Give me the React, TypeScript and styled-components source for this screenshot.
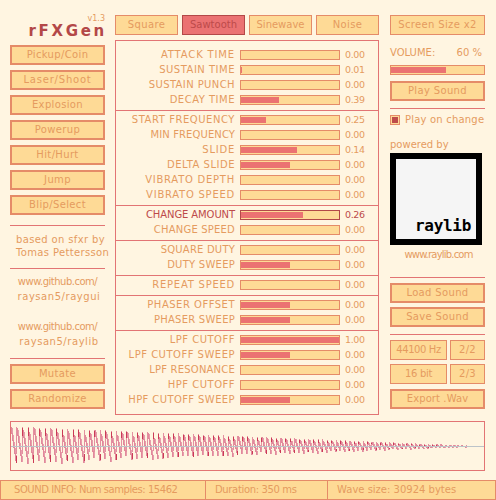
import React from 'react';
import styled, { createGlobalStyle } from 'styled-components';

const GlobalStyle = createGlobalStyle`
  html, body {
    margin: 0;
    padding: 0;
    background-color: #fff5e1;
  }
  * {
    box-sizing: border-box;
  }
`;

const Page = styled.div`
  width: 496px;
  height: 500px;
  overflow: hidden;
  display: flex;
  flex-direction: column;
  background-color: #fff5e1;
  color: #e59b5f;
  font-family: 'DejaVu Sans', sans-serif;
  font-size: 10px;
  line-height: 10px;
  letter-spacing: 0.35px;
`;

const Main = styled.div`
  display: flex;
  height: 415px;
  padding: 15px 11px 0 10px;
`;

const LeftColumn = styled.div`
  width: 95px;
  margin-right: 10px;
  display: flex;
  flex-direction: column;
`;

const MiddleColumn = styled.div`
  width: 264px;
  margin-right: 11px;
  display: flex;
  flex-direction: column;
`;

const RightColumn = styled.div`
  width: 95px;
  display: flex;
  flex-direction: column;
`;

const TitleBlock = styled.div`
  height: 30px;
  display: flex;
  flex-direction: column;
  align-items: flex-end;
`;

const Version = styled.div`
  height: 8px;
  line-height: 8px;
  font-size: 8px;
  letter-spacing: 0;
`;

const Title = styled.div`
  height: 12px;
  margin-top: 2px;
  margin-right: -2px;
  line-height: 12px;
  font-weight: bold;
  font-size: 15px;
  letter-spacing: 2.7px;
  color: #b34848;
`;

const Button = styled.div<{ $thin?: boolean; $pressed?: boolean; $mt?: number; $ls?: number }>`
  height: 20px;
  flex: none;
  margin-top: ${(p) => p.$mt ?? 0}px;
  display: flex;
  align-items: center;
  justify-content: center;
  white-space: nowrap;
  letter-spacing: ${(p) => p.$ls ?? 0.35}px;
  border: ${(p) => (p.$thin || p.$pressed ? 1 : 2)}px solid ${(p) => (p.$pressed ? '#b34848' : '#e58b68')};
  background-color: ${(p) => (p.$pressed ? '#eb7272' : '#feda96')};
  color: ${(p) => (p.$pressed ? '#bd4a4a' : '#e59b5f')};
`;

const Rule = styled.div<{ $mt: number }>`
  height: 1px;
  flex: none;
  margin-top: ${(p) => p.$mt}px;
  background-color: #e27474;
`;

const Note = styled.div<{ $mt: number; $ls?: number; $shift?: number }>`
  height: 10px;
  flex: none;
  margin-top: ${(p) => p.$mt}px;
  padding-left: ${(p) => p.$shift ?? 0}px;
  text-align: center;
  white-space: nowrap;
  letter-spacing: ${(p) => p.$ls ?? 0.35}px;
`;

const Tabs = styled.div`
  display: flex;
  gap: 4px;
  height: 20px;
  flex: none;
  & > * {
    width: 63px;
  }
`;

const Panel = styled.div`
  margin-top: 5px;
  height: 375px;
  border: 1px solid #e27474;
  display: flex;
  flex-direction: column;
`;

const Section = styled.div<{ $first?: boolean; $last?: boolean }>`
  display: flex;
  flex-direction: column;
  gap: 5px;
  padding-top: ${(p) => (p.$first ? 9 : 4)}px;
  padding-bottom: ${(p) => (p.$last ? 9 : 5)}px;
  border-top: ${(p) => (p.$first ? 'none' : '1px solid #e27474')};
`;

const Row = styled.div<{ $active?: boolean }>`
  display: grid;
  grid-template-columns: 119px 100px 33px;
  column-gap: 5px;
  height: 10px;
  color: ${(p) => (p.$active ? '#bd4a4a' : '#e59b5f')};
`;

const Label = styled.div<{ $ls?: number }>`
  text-align: right;
  white-space: nowrap;
  letter-spacing: ${(p) => p.$ls ?? 0.5}px;
`;

const Track = styled.div<{ $active?: boolean }>`
  height: 10px;
  padding: 1px 0;
  border: 1px solid ${(p) => (p.$active ? '#b34848' : '#e58b68')};
  background-color: #feda96;
`;

const Fill = styled.div`
  height: 100%;
  background-color: #eb7272;
`;

const Value = styled.div`
  font-size: 9.5px;
  letter-spacing: -0.4px;
`;

const VolumeRow = styled.div`
  margin-top: 13px;
  height: 10px;
  padding-right: 3px;
  display: flex;
  justify-content: space-between;
  white-space: nowrap;
  letter-spacing: 0;
`;

const VolumeTrack = styled(Track)`
  margin-top: 7px;
  flex: none;
`;

const CheckRow = styled.div`
  margin-top: 6px;
  height: 10px;
  display: flex;
  gap: 5px;
  white-space: nowrap;
  letter-spacing: 0.2px;
`;

const CheckBox = styled.div`
  width: 10px;
  height: 10px;
  padding: 1px;
  border: 1px solid #e58b68;
  background-color: #feda96;
  &::after {
    content: '';
    display: block;
    width: 100%;
    height: 100%;
    background-color: #bd4a4a;
  }
`;

const Powered = styled.div`
  margin-top: 15px;
  height: 10px;
  white-space: nowrap;
  letter-spacing: 0;
`;

const Logo = styled.div`
  margin-top: 3px;
  width: 92px;
  height: 92px;
  flex: none;
  display: flex;
  align-items: flex-end;
  justify-content: flex-end;
  padding: 0 5px 5px 0;
  border: 6px solid #000;
  background-color: #f5f5f5;
  color: #000;
  font-family: 'DejaVu Sans Mono', monospace;
  font-weight: bold;
  font-size: 16px;
  line-height: 16px;
  letter-spacing: -0.3px;
`;

const OptionRow = styled.div<{ $mt: number }>`
  display: grid;
  grid-template-columns: 57px 35px;
  column-gap: 3px;
  margin-top: ${(p) => p.$mt}px;
  flex: none;
`;

const WavePanel = styled.div`
  margin: 6px 11px 0 10px;
  height: 50px;
  flex: none;
  border: 1px solid #e27474;
`;

const WaveSvg = styled.svg`
  display: block;
`;

const StatusBar = styled.div`
  margin-top: 9px;
  height: 20px;
  flex: none;
  display: grid;
  grid-template-columns: 206px 122px 168px;
`;

const StatusCell = styled.div<{ $first?: boolean; $ls: number }>`
  display: flex;
  align-items: center;
  padding-left: ${(p) => (p.$first ? 13 : 9)}px;
  white-space: nowrap;
  letter-spacing: ${(p) => p.$ls}px;
  border: 1px solid #e58b68;
  border-left-width: ${(p) => (p.$first ? 1 : 0)}px;
  background-color: #feda96;
`;

type Param = { name: string; value: number; bipolar?: boolean; active?: boolean; ls?: number };

const groups: Param[][] = [
  [
    { name: 'ATTACK TIME', value: 0, ls: 0.85 },
    { name: 'SUSTAIN TIME', value: 0.01 },
    { name: 'SUSTAIN PUNCH', value: 0, ls: 0.4 },
    { name: 'DECAY TIME', value: 0.39 },
  ],
  [
    { name: 'START FREQUENCY', value: 0.25, ls: 0.55 },
    { name: 'MIN FREQUENCY', value: 0, ls: 0.1 },
    { name: 'SLIDE', value: 0.14, bipolar: true, ls: 0.75 },
    { name: 'DELTA SLIDE', value: 0, bipolar: true },
    { name: 'VIBRATO DEPTH', value: 0, ls: 0.75 },
    { name: 'VIBRATO SPEED', value: 0, ls: 0.75 },
  ],
  [
    { name: 'CHANGE AMOUNT', value: 0.26, bipolar: true, active: true, ls: -0.1 },
    { name: 'CHANGE SPEED', value: 0, ls: 0.2 },
  ],
  [
    { name: 'SQUARE DUTY', value: 0, ls: 0.2 },
    { name: 'DUTY SWEEP', value: 0, bipolar: true, ls: 0.25 },
  ],
  [{ name: 'REPEAT SPEED', value: 0, ls: 0.75 }],
  [
    { name: 'PHASER OFFSET', value: 0, bipolar: true },
    { name: 'PHASER SWEEP', value: 0, bipolar: true, ls: 0.25 },
  ],
  [
    { name: 'LPF CUTOFF', value: 1 },
    { name: 'LPF CUTOFF SWEEP', value: 0, bipolar: true },
    { name: 'LPF RESONANCE', value: 0, ls: 0.2 },
    { name: 'HPF CUTOFF', value: 0 },
    { name: 'HPF CUTOFF SWEEP', value: 0, bipolar: true, ls: 0.4 },
  ],
];

function Waveform() {
  const cols: React.ReactNode[] = [];
  const mid = 24;
  const phaseAt = (x: number) => x / 5.8 + x * x * 0.000075;
  for (let x = 0; x < 467; x++) {
    const amp = 19.5 * (1 - x / 467);
    const p0 = phaseAt(x);
    const p1 = phaseAt(x + 1);
    const jump = Math.floor(p0) !== Math.floor(p1);
    const v0 = amp * (1 - 2 * (p0 - Math.floor(p0)));
    const v1 = amp * (1 - 2 * (p1 - Math.floor(p1)));
    if (jump) {
      const darkTop = Math.floor(p1) % 3 !== 1;
      cols.push(<rect key={x} x={x} y={mid - amp} width={1} height={amp * 1.4} fill="#e48fa0" />);
      cols.push(
        <rect
          key={`d${x}`}
          x={x}
          y={darkTop ? mid - amp + 1 : mid + amp * 0.5}
          width={1}
          height={amp * 0.4}
          fill="#cb3a56"
        />
      );
    } else {
      const top = mid - Math.max(v0, v1);
      const h = Math.abs(v0 - v1) + 1;
      cols.push(<rect key={x} x={x} y={top} width={1} height={h} fill="#e1899b" />);
      cols.push(<rect key={`w${x}`} x={x + 1} y={top + h * 0.2} width={1} height={h * 0.8} fill="#e79dab" />);
    }
  }
  return (
    <WaveSvg width={473} height={48} shapeRendering="crispEdges">
      {cols}
      <rect x={0} y={24} width={473} height={1} fill="#bcc3c9" />
    </WaveSvg>
  );
}

export default function App() {
  return (
    <Page>
      <GlobalStyle />
      <Main>
        <LeftColumn>
          <TitleBlock>
            <Version>v1.3</Version>
            <Title>rFXGen</Title>
          </TitleBlock>
          {['Pickup/Coin', 'Laser/Shoot', 'Explosion', 'Powerup', 'Hit/Hurt', 'Jump', 'Blip/Select'].map((name, i) => (
            <Button key={name} $mt={i === 0 ? 0 : 5} $ls={name === 'Laser/Shoot' ? 0.8 : 0.35}>{name}</Button>
          ))}
          <Rule $mt={10} />
          <Note $mt={9} $shift={6}>based on sfxr by</Note>
          <Note $mt={3} $shift={6}>Tomas Pettersson</Note>
          <Rule $mt={10} />
          <Note $mt={8} $ls={-0.5}>www.github.com/</Note>
          <Note $mt={5} $ls={0.55} $shift={3}>raysan5/raygui</Note>
          <Note $mt={20} $ls={-0.5}>www.github.com/</Note>
          <Note $mt={5} $ls={0.55} $shift={3}>raysan5/raylib</Note>
          <Rule $mt={11} />
          <Button $mt={5}>Mutate</Button>
          <Button $mt={5}>Randomize</Button>
        </LeftColumn>
        <MiddleColumn>
          <Tabs>
            <Button $thin>Square</Button>
            <Button $pressed $ls={0}>Sawtooth</Button>
            <Button $thin $ls={0}>Sinewave</Button>
            <Button $thin>Noise</Button>
          </Tabs>
          <Panel>
            {groups.map((group, i) => (
              <Section key={i} $first={i === 0} $last={i === groups.length - 1}>
                {group.map((param) => {
                  const ratio = param.bipolar ? (param.value + 1) / 2 : param.value;
                  return (
                    <Row key={param.name} $active={param.active}>
                      <Label $ls={param.ls}>{param.name}</Label>
                      <Track $active={param.active}>
                        <Fill style={{ width: `${ratio * 98}px` }} />
                      </Track>
                      <Value>{param.value.toFixed(2)}</Value>
                    </Row>
                  );
                })}
              </Section>
            ))}
          </Panel>
        </MiddleColumn>
        <RightColumn>
          <Button $thin>Screen Size x2</Button>
          <VolumeRow>
            <span>VOLUME:</span>
            <span>60 %</span>
          </VolumeRow>
          <VolumeTrack>
            <Fill style={{ width: '55px' }} />
          </VolumeTrack>
          <Button $mt={6}>Play Sound</Button>
          <Rule $mt={7} />
          <CheckRow>
            <CheckBox />
            <span>Play on change</span>
          </CheckRow>
          <Powered>powered by</Powered>
          <Logo>raylib</Logo>
          <Note $mt={5} $ls={-0.8} $shift={2}>www.raylib.com</Note>
          <Rule $mt={17} />
          <Button $mt={5}>Load Sound</Button>
          <Button $mt={4}>Save Sound</Button>
          <Rule $mt={7} />
          <OptionRow $mt={5}>
            <Button $thin $ls={-0.4}>44100 Hz</Button>
            <Button $thin>2/2</Button>
          </OptionRow>
          <OptionRow $mt={4}>
            <Button $thin $ls={-0.3}>16 bit</Button>
            <Button $thin>2/3</Button>
          </OptionRow>
          <Button $mt={5} $ls={0.1}>Export .Wav</Button>
        </RightColumn>
      </Main>
      <WavePanel>
        <Waveform />
      </WavePanel>
      <StatusBar>
        <StatusCell $first $ls={-0.45}>SOUND INFO: Num samples: 15462</StatusCell>
        <StatusCell $ls={-0.35}>Duration: 350 ms</StatusCell>
        <StatusCell $ls={0}>Wave size: 30924 bytes</StatusCell>
      </StatusBar>
    </Page>
  );
}
